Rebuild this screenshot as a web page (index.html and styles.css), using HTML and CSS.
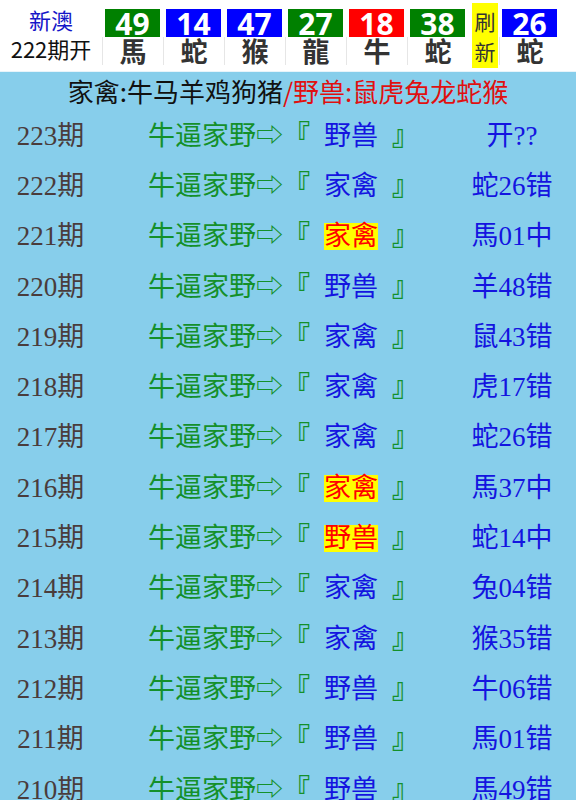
FILE: index.html
```html
<!DOCTYPE html>
<html lang="zh-CN">
<head>
    <meta charset="UTF-8">
    <meta name="viewport" content="width=device-width, initial-scale=1.0">
    <title>新澳 家禽野兽</title>
    <link rel="stylesheet" href="styles.css">
</head>
<body>
    <header class="draw">
        <div class="draw-label">
            <span class="draw-name">新澳</span>
            <span class="draw-issue">222期开</span>
        </div>
        <div class="ball"><span class="num green">49</span><span class="sign">馬</span></div>
        <div class="ball"><span class="num blue">14</span><span class="sign">蛇</span></div>
        <div class="ball"><span class="num blue">47</span><span class="sign">猴</span></div>
        <div class="ball"><span class="num green">27</span><span class="sign">龍</span></div>
        <div class="ball"><span class="num red">18</span><span class="sign">牛</span></div>
        <div class="ball"><span class="num green">38</span><span class="sign">蛇</span></div>
        <div class="refresh"><span>刷</span><span>新</span></div>
        <div class="ball"><span class="num blue">26</span><span class="sign">蛇</span></div>
    </header>

    <main class="board">
        <h2 class="legend">家禽:牛马羊鸡狗猪<span class="wild">/野兽:鼠虎兔龙蛇猴</span></h2>

        <ul class="rows">
            <li class="row"><span class="issue">223期</span><span class="tip">牛逼家野⇨<i class="mark">『</i><b class="pick">野兽</b><i class="mark">』</i></span><span class="result">开??</span></li>
            <li class="row"><span class="issue">222期</span><span class="tip">牛逼家野⇨<i class="mark">『</i><b class="pick">家禽</b><i class="mark">』</i></span><span class="result">蛇26错</span></li>
            <li class="row"><span class="issue">221期</span><span class="tip">牛逼家野⇨<i class="mark">『</i><b class="pick hit">家禽</b><i class="mark">』</i></span><span class="result">馬01中</span></li>
            <li class="row"><span class="issue">220期</span><span class="tip">牛逼家野⇨<i class="mark">『</i><b class="pick">野兽</b><i class="mark">』</i></span><span class="result">羊48错</span></li>
            <li class="row"><span class="issue">219期</span><span class="tip">牛逼家野⇨<i class="mark">『</i><b class="pick">家禽</b><i class="mark">』</i></span><span class="result">鼠43错</span></li>
            <li class="row"><span class="issue">218期</span><span class="tip">牛逼家野⇨<i class="mark">『</i><b class="pick">家禽</b><i class="mark">』</i></span><span class="result">虎17错</span></li>
            <li class="row"><span class="issue">217期</span><span class="tip">牛逼家野⇨<i class="mark">『</i><b class="pick">家禽</b><i class="mark">』</i></span><span class="result">蛇26错</span></li>
            <li class="row"><span class="issue">216期</span><span class="tip">牛逼家野⇨<i class="mark">『</i><b class="pick hit">家禽</b><i class="mark">』</i></span><span class="result">馬37中</span></li>
            <li class="row"><span class="issue">215期</span><span class="tip">牛逼家野⇨<i class="mark">『</i><b class="pick hit">野兽</b><i class="mark">』</i></span><span class="result">蛇14中</span></li>
            <li class="row"><span class="issue">214期</span><span class="tip">牛逼家野⇨<i class="mark">『</i><b class="pick">家禽</b><i class="mark">』</i></span><span class="result">兔04错</span></li>
            <li class="row"><span class="issue">213期</span><span class="tip">牛逼家野⇨<i class="mark">『</i><b class="pick">家禽</b><i class="mark">』</i></span><span class="result">猴35错</span></li>
            <li class="row"><span class="issue">212期</span><span class="tip">牛逼家野⇨<i class="mark">『</i><b class="pick">野兽</b><i class="mark">』</i></span><span class="result">牛06错</span></li>
            <li class="row"><span class="issue">211期</span><span class="tip">牛逼家野⇨<i class="mark">『</i><b class="pick">野兽</b><i class="mark">』</i></span><span class="result">馬01错</span></li>
            <li class="row"><span class="issue">210期</span><span class="tip">牛逼家野⇨<i class="mark">『</i><b class="pick">野兽</b><i class="mark">』</i></span><span class="result">馬49错</span></li>
        </ul>
    </main>
</body>
</html>
```

FILE: styles.css
```css
:root {
    --sky: #87ceeb;
    --green: #008000;
    --blue: #0000ff;
    --red: #ff0000;
    --ink: #333;
}

body {
    margin: 0;
    background-color: var(--sky);
    font-family: "Noto Sans CJK SC", sans-serif;
}

/* --- Latest draw header --- */
.draw {
    display: flex;
    height: 71px;
    background-color: #fff;
    border-bottom: 1px solid #e8f4fa;
}

.draw-label {
    width: 102px;
    display: flex;
    flex-direction: column;
    align-items: center;
    padding-top: 5px;
    font-size: 22px;
    line-height: 29px;
}

.draw-name {
    color: #1515c8;
}

.draw-issue {
    color: #111;
}

.ball {
    width: 61px;
    display: flex;
    flex-direction: column;
    align-items: center;
    padding-top: 9px;
}

.num {
    width: 55px;
    height: 28px;
    line-height: 29px;
    text-align: center;
    color: #fff;
    font-family: "Open Sans", sans-serif;
    font-weight: 700;
    font-size: 30px;
}

.num.green { background-color: var(--green); }
.num.blue { background-color: var(--blue); }
.num.red { background-color: var(--red); }

.sign {
    width: 100%;
    height: 28px;
    line-height: 28px;
    text-align: center;
    border-left: 1px solid #e6e6e6;
    box-sizing: border-box;
    font-size: 27px;
    font-weight: 700;
    color: var(--ink);
}

.refresh {
    width: 26px;
    margin: 3px 1px 3px 4px;
    background-color: #ffff00;
    display: flex;
    flex-direction: column;
    align-items: center;
    justify-content: center;
    font-size: 21px;
    line-height: 30px;
    color: #333;
}

/* --- Prediction board --- */
.legend {
    margin: 0;
    height: 36px;
    line-height: 38px;
    text-align: center;
    font-size: 26px;
    font-weight: 400;
    color: #111;
}

.wild {
    color: #e01010;
}

.rows {
    list-style: none;
    margin: 0;
    padding: 0;
}

.row {
    display: grid;
    grid-template-columns: 101px 365px 92px;
    align-items: center;
    height: 50.3px;
    font-family: "Liberation Serif", "Noto Sans CJK SC", serif;
    font-size: 27px;
}

.issue {
    text-align: center;
    color: #4a3c3c;
}

.tip {
    text-align: center;
    white-space: nowrap;
    color: #14902a;
}

.mark {
    font-style: normal;
    font-weight: 700;
}

.pick {
    display: inline-block;
    margin: 0 14px;
    line-height: 27px;
    font-weight: 400;
    color: #1414e0;
}

.pick.hit {
    background-color: #ffff00;
    color: #f00;
}

.result {
    text-align: center;
    color: #1414e0;
}
```
